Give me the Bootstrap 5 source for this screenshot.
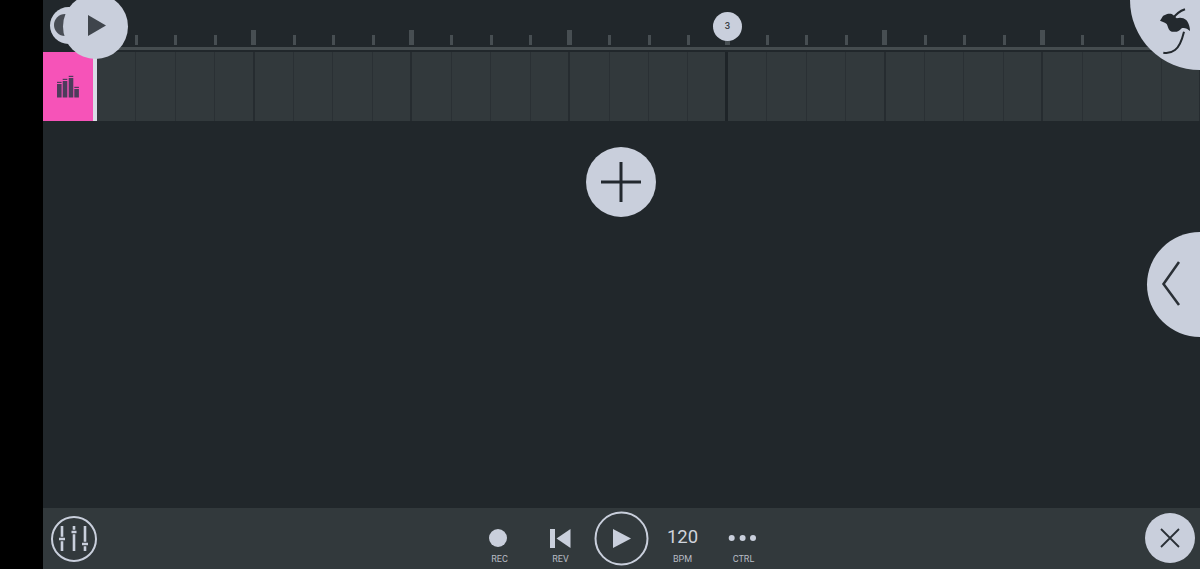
<!DOCTYPE html>
<html lang="en">
<head>
    <meta charset="UTF-8">
    <meta name="viewport" content="width=device-width, initial-scale=1.0">
    <title>Playlist</title>
    <link href="https://cdn.jsdelivr.net/npm/bootstrap@5.3.0/dist/css/bootstrap.min.css" rel="stylesheet">
    <style>
        body { background: #000; font-family: Roboto, "Liberation Sans", sans-serif; }
        .app-shell { width: 1200px; height: 569px; padding-left: 43px; overflow: hidden; }
        .app-main { background: #21272b; height: 569px; position: relative; overflow: hidden; }
        .ruler { height: 47px; padding-left: 54px; }
        .ruler-slot { flex: 0 0 39.45px; height: 45px; display: flex; justify-content: flex-end; align-items: flex-end; }
        .tick { width: 3px; height: 10px; margin-right: -1.5px; background: #474e52; }
        .tick.big { width: 5px; height: 15px; margin-right: -1.5px; }
        .ruler-line { height: 3px; margin-left: 55px; background: #454c4f; }
        .track-row { height: 69px; margin-top: 2px; }
        .track-icon { flex: 0 0 50px; background: #f653b8; }
        .playhead { flex: 0 0 5px; background: #d9dde6; margin-top: -4px; }
        .track-cells { margin-left: -1.2px; min-width: 0; }
        .cell-box { flex: 0 0 39.45px; background: #32393c; border-right: 1px solid #2a3034; }
        .cell-box.bar { border-right: 2px solid #262c30; }
        .cell-box.bar-strong { border-right: 3px solid #1e2428; }
        .workspace { height: 387px; padding-top: 26px; }
        .round-btn { background: #c9cfdc; border-radius: 50%; }
        .add-btn { width: 70px; height: 70px; margin-left: 543px; }
        .bottom-bar { height: 61px; background: #32393c; position: relative; }
        .transport-item { width: 61px; height: 61px; color: #c9cfdc; text-align: center; position: relative; }
        .transport-item svg { display: block; margin: 0 auto; }
        .transport-label { position: absolute; left: 0; right: 0; top: 45px; font-size: 9px; line-height: 12px; color: #b8bcc4; }
        .bpm-value { font-size: 18.5px; line-height: 24px; padding-top: 17px; color: #d0d4dc; }
        .mixer-btn { position: absolute; left: 7px; top: 7px; }
        .close-btn { position: absolute; left: 1102px; top: 5px; width: 50px; height: 50px; }
        .over-moon { position: absolute; left: 7px; top: 7px; width: 37px; height: 37px; overflow: hidden; }
        .moon-dark { position: absolute; left: 4px; top: 7px; width: 22px; height: 22px; border-radius: 50%; background: #484d55; }
        .over-play { position: absolute; left: 20px; top: -6px; width: 65px; height: 65px; }
        .over-play svg { margin: 0 0 2px 2.4px; }
        .over-marker { position: absolute; left: 670px; top: 12px; width: 29px; height: 29px; font-size: 9.5px; color: #3a4046; font-weight: 500; }
        .over-logo { position: absolute; left: 1087px; top: -70px; width: 140px; height: 140px; }
        .over-back { position: absolute; left: 1104px; top: 232px; width: 106px; height: 105px; }
    </style>
</head>
<body>
    <div class="app-shell">
        <div class="app-main">
            <div class="ruler d-flex" id="ruler"></div>
            <div class="ruler-line"></div>
            <div class="track-row d-flex">
                <div class="track-icon d-flex align-items-center justify-content-center">
                    <svg width="24" height="24" viewBox="1 0 24 24" fill="#4d3c5c">
                        <rect x="2" y="9" width="4.6" height="13.5"/><rect x="2" y="6.8" width="4.6" height="1.2"/>
                        <rect x="7.7" y="6" width="4.6" height="16.5"/><rect x="7.7" y="3.8" width="4.6" height="1.2"/>
                        <rect x="13.7" y="3" width="4.6" height="19.5"/><rect x="13.7" y="0.8" width="4.6" height="1.2"/>
                        <rect x="19.3" y="14" width="4.6" height="8.5"/><rect x="19.3" y="11.8" width="4.6" height="1.2"/>
                    </svg>
                </div>
                <div class="playhead"></div>
                <div class="track-cells d-flex flex-grow-1" id="cells"></div>
            </div>
            <div class="workspace">
                <div class="round-btn add-btn d-flex align-items-center justify-content-center">
                    <svg width="40" height="40" viewBox="0 0 40 40" stroke="#22282e" stroke-width="3"><path d="M0 20H40M20 0V40"/></svg>
                </div>
            </div>
            <div class="bottom-bar d-flex justify-content-center">
                <div class="mixer-btn">
                    <svg width="48" height="48" viewBox="0 0 48 48" fill="none" stroke="#c9cfdc">
                        <circle cx="24" cy="24" r="22" stroke-width="2"/>
                        <path d="M12 11V21.700M12 26.300V36M24 11V14.700M24 19.300V36M35 11V26.700M35 31.300V36" stroke-width="2.600"/>
                        <path d="M9 24H15M21.500 17H26.500M32 29H38" stroke-width="2.600"/>
                    </svg>
                </div>
                <div class="transport-item">
                    <svg class="mt-3" width="61" height="26" viewBox="0 0 61 26"><circle cx="29" cy="14" r="9" fill="#c9cfdc"/></svg>
                    <span class="transport-label">REC</span>
                </div>
                <div class="transport-item">
                    <svg class="mt-3" width="61" height="26" viewBox="0 0 61 26" fill="#c9cfdc"><rect x="20" y="5" width="5" height="19"/><path d="M40.500 5V24L26.500 14.500Z"/></svg>
                    <span class="transport-label">REV</span>
                </div>
                <div class="transport-item">
                    <svg width="61" height="61" viewBox="0 0 61 61" fill="none"><circle cx="30.500" cy="30.500" r="26" stroke="#c9cfdc" stroke-width="2"/><path d="M22 21V40L40 30.500Z" fill="#c9cfdc"/></svg>
                </div>
                <div class="transport-item">
                    <div class="bpm-value">120</div>
                    <span class="transport-label">BPM</span>
                </div>
                <div class="transport-item">
                    <svg class="mt-3" width="61" height="26" viewBox="0 0 61 26" fill="#c9cfdc"><circle cx="18.700" cy="14" r="3"/><circle cx="29.600" cy="14" r="3"/><circle cx="40" cy="14" r="3"/></svg>
                    <span class="transport-label">CTRL</span>
                </div>
                <div class="round-btn close-btn d-flex align-items-center justify-content-center">
                    <svg width="20" height="20" viewBox="0 0 20 20" stroke="#2a3036" stroke-width="1.800"><path d="M1 1L19 19M19 1L1 19"/></svg>
                </div>
            </div>

            <div class="round-btn over-moon"><div class="moon-dark"></div></div>
            <div class="round-btn over-play d-flex align-items-center justify-content-center">
                <svg width="20" height="21" viewBox="0 0 20 21"><path d="M1 0V21L19 10.500Z" fill="#3f454c"/></svg>
            </div>
            <div class="round-btn over-marker d-flex align-items-center justify-content-center">3</div>
            <div class="round-btn over-logo">
                <svg class="d-block" width="140" height="140" viewBox="0 0 140 140" fill="none">
                    <path d="M30 90.700C32 88 33 85 35 85C37 83.500 40 83.500 41.700 84C44 85 45 87 46.700 88.300C49 87.500 51 87.500 53.300 88.300C56 89.500 57.500 91 58.300 93.300C59.500 96 60 98.500 60 101C58 99.500 56.500 98.300 55 98.300C53.500 98 52.500 98 51.700 98.300C50 100 48.500 101.500 46.700 101.700C44 102 41.500 102 40 100.700C38 99 38 96 36.700 94C35 92.500 32.500 92 30 90.700Z" fill="#23292e"/>
                    <path d="M43.300 88.300C46 84 50 81 55 79.300" stroke="#23292e" stroke-width="2"/>
                    <path d="M54 101.700C52 110 49 117 45 120C41 123 37 123.500 33.300 122.700" stroke="#23292e" stroke-width="2"/>
                </svg>
            </div>
            <div class="round-btn over-back">
                <svg class="d-block" width="106" height="105" viewBox="0 0 106 105" fill="none"><path d="M32 30L16.500 52L32 73" stroke="#2a3036" stroke-width="2.500"/></svg>
            </div>
        </div>
    </div>

    <script>
        // ruler ticks and track cells share the same slot width
        const ruler = document.getElementById('ruler');
        const cells = document.getElementById('cells');
        for (let i = 1; i <= 28; i++) {
            const big = i % 4 === 0;
            ruler.innerHTML += `<div class="ruler-slot"><div class="tick ${big ? 'big' : ''}"></div></div>`;
            cells.innerHTML += `<div class="cell-box ${i === 16 ? 'bar-strong' : big ? 'bar' : ''}"></div>`;
        }
    </script>
    <script src="https://cdn.jsdelivr.net/npm/bootstrap@5.3.0/dist/js/bootstrap.bundle.min.js"></script>
</body>
</html>
